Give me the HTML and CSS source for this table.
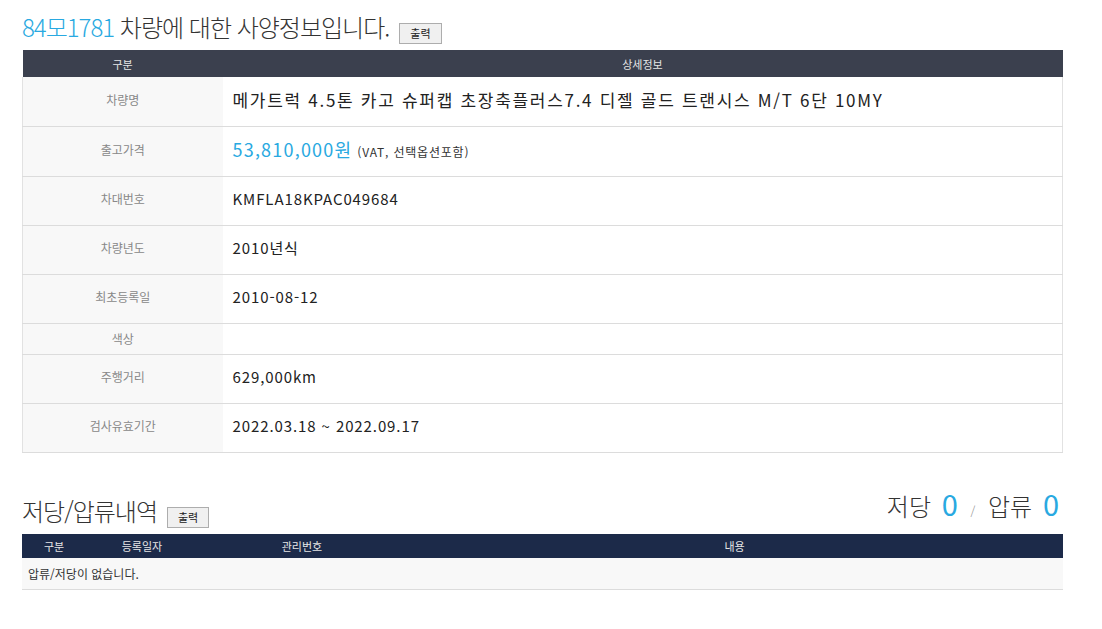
FILE: index.html
```html
<!DOCTYPE html>
<html lang="ko">
<head>
<meta charset="UTF-8">
<meta name="viewport" content="width=device-width, initial-scale=1.0">
<title>차량 사양정보</title>
<link rel="stylesheet" href="styles.css">
</head>
<body>
<div class="wrap">
  <div class="title-row">
    <h1 class="title"><span class="blue">84모1781</span> 차량에 대한 사양정보입니다.</h1>
    <button class="print-btn">출력</button>
  </div>

  <table class="spec-table">
    <thead>
      <tr>
        <th class="col-label">구분</th>
        <th>상세정보</th>
      </tr>
    </thead>
    <tbody>
      <tr class="tall">
        <td class="label">차량명</td>
        <td class="value big">메가트럭 4.5톤 카고 슈퍼캡 초장축플러스7.4 디젤 골드 트랜시스 M/T 6단 10MY</td>
      </tr>
      <tr class="tall">
        <td class="label">출고가격</td>
        <td class="value"><span class="price">53,810,000원</span> <span class="note">(VAT, 선택옵션포함)</span></td>
      </tr>
      <tr>
        <td class="label">차대번호</td>
        <td class="value">KMFLA18KPAC049684</td>
      </tr>
      <tr>
        <td class="label">차량년도</td>
        <td class="value">2010년식</td>
      </tr>
      <tr>
        <td class="label">최초등록일</td>
        <td class="value">2010-08-12</td>
      </tr>
      <tr class="short">
        <td class="label">색상</td>
        <td class="value"></td>
      </tr>
      <tr>
        <td class="label">주행거리</td>
        <td class="value">629,000km</td>
      </tr>
      <tr>
        <td class="label">검사유효기간</td>
        <td class="value">2022.03.18 ~ 2022.09.17</td>
      </tr>
    </tbody>
  </table>

  <div class="section-head">
    <div class="title-row">
      <h2 class="title">저당/압류내역</h2>
      <button class="print-btn">출력</button>
    </div>
    <div class="count">
      저당 <span class="num">0</span> <span class="slash">/</span> 압류 <span class="num">0</span>
    </div>
  </div>

  <table class="lien-table">
    <thead>
      <tr>
        <th class="c1">구분</th>
        <th class="c2">등록일자</th>
        <th class="c3">관리번호</th>
        <th>내용</th>
      </tr>
    </thead>
    <tbody>
      <tr>
        <td colspan="4">압류/저당이 없습니다.</td>
      </tr>
    </tbody>
  </table>
</div>
</body>
</html>
```

FILE: styles.css
```css
body {
  margin: 0;
  font-family: "Noto Sans CJK KR", "Noto Sans", sans-serif;
  color: #333;
  background-color: #fff;
}
.wrap {
  width: 1041px;
  margin-left: 22px;
  padding-top: 10px;
}
.title-row {
  display: flex;
  align-items: flex-end;
  gap: 10px;
}
.title {
  margin: 0;
  font-size: 24px;
  font-weight: 300;
  line-height: 34px;
  letter-spacing: -1px;
  color: #333;
}
.blue {
  color: #29a9e1;
}
.print-btn {
  height: 21px;
  padding: 0 10px;
  margin-bottom: 0;
  font-family: "Noto Sans CJK KR", sans-serif;
  font-size: 11px;
  line-height: 17px;
  color: #222;
  background-color: #f0f0f0;
  border: 1px solid #adadad;
}
.spec-table {
  width: 100%;
  margin-top: 6px;
  border-collapse: collapse;
}
.spec-table th {
  height: 27px;
  padding: 0;
  font-size: 11px;
  font-weight: normal;
  color: #e6e6e6;
  background-color: #3b404e;
}
.spec-table .col-label {
  width: 200px;
}
.spec-table td {
  height: 43px;
  padding: 0 0 5px 0;
  border-bottom: 1px solid #dcdcdc;
}
.spec-table tr.tall td {
  height: 44px;
}
.spec-table tr.short td {
  height: 28px;
  padding-bottom: 2px;
}
.spec-table .label {
  text-align: center;
  font-size: 12px;
  color: #888;
  background-color: #f8f8f8;
  border-left: 1px solid #e2e2e2;
}
.spec-table .value {
  padding-left: 10px;
  font-size: 15px;
  letter-spacing: 0.9px;
  color: #222;
  border-right: 1px solid #e2e2e2;
}
.spec-table .value.big {
  font-size: 17px;
  letter-spacing: 1.7px;
}
.price {
  font-size: 18px;
  letter-spacing: 1.2px;
  color: #29a9e1;
}
.note {
  font-size: 12px;
  letter-spacing: 0.8px;
  color: #333;
}
.section-head {
  display: flex;
  justify-content: space-between;
  align-items: flex-end;
  margin-top: 33px;
  padding-right: 4px;
}
.count {
  font-size: 24px;
  font-weight: 300;
  line-height: 34px;
  color: #333;
}
.count .num {
  font-size: 29px;
  font-weight: 400;
  color: #29a9e1;
  margin-left: 4px;
}
.count .slash {
  font-size: 12px;
  color: #888;
  margin: 0 6px;
}
.lien-table {
  width: 100%;
  margin-top: 6px;
  border-collapse: collapse;
}
.lien-table th {
  height: 24px;
  padding: 0;
  font-size: 11px;
  font-weight: normal;
  color: #e6e6e6;
  background-color: #1c2a49;
}
.lien-table .c1 {
  width: 64px;
}
.lien-table .c2 {
  width: 112px;
}
.lien-table .c3 {
  width: 208px;
}
.lien-table td {
  height: 31px;
  padding: 0 0 0 6px;
  font-size: 12px;
  color: #333;
  background-color: #f8f8f8;
  border-bottom: 1px solid #dcdcdc;
}
```
